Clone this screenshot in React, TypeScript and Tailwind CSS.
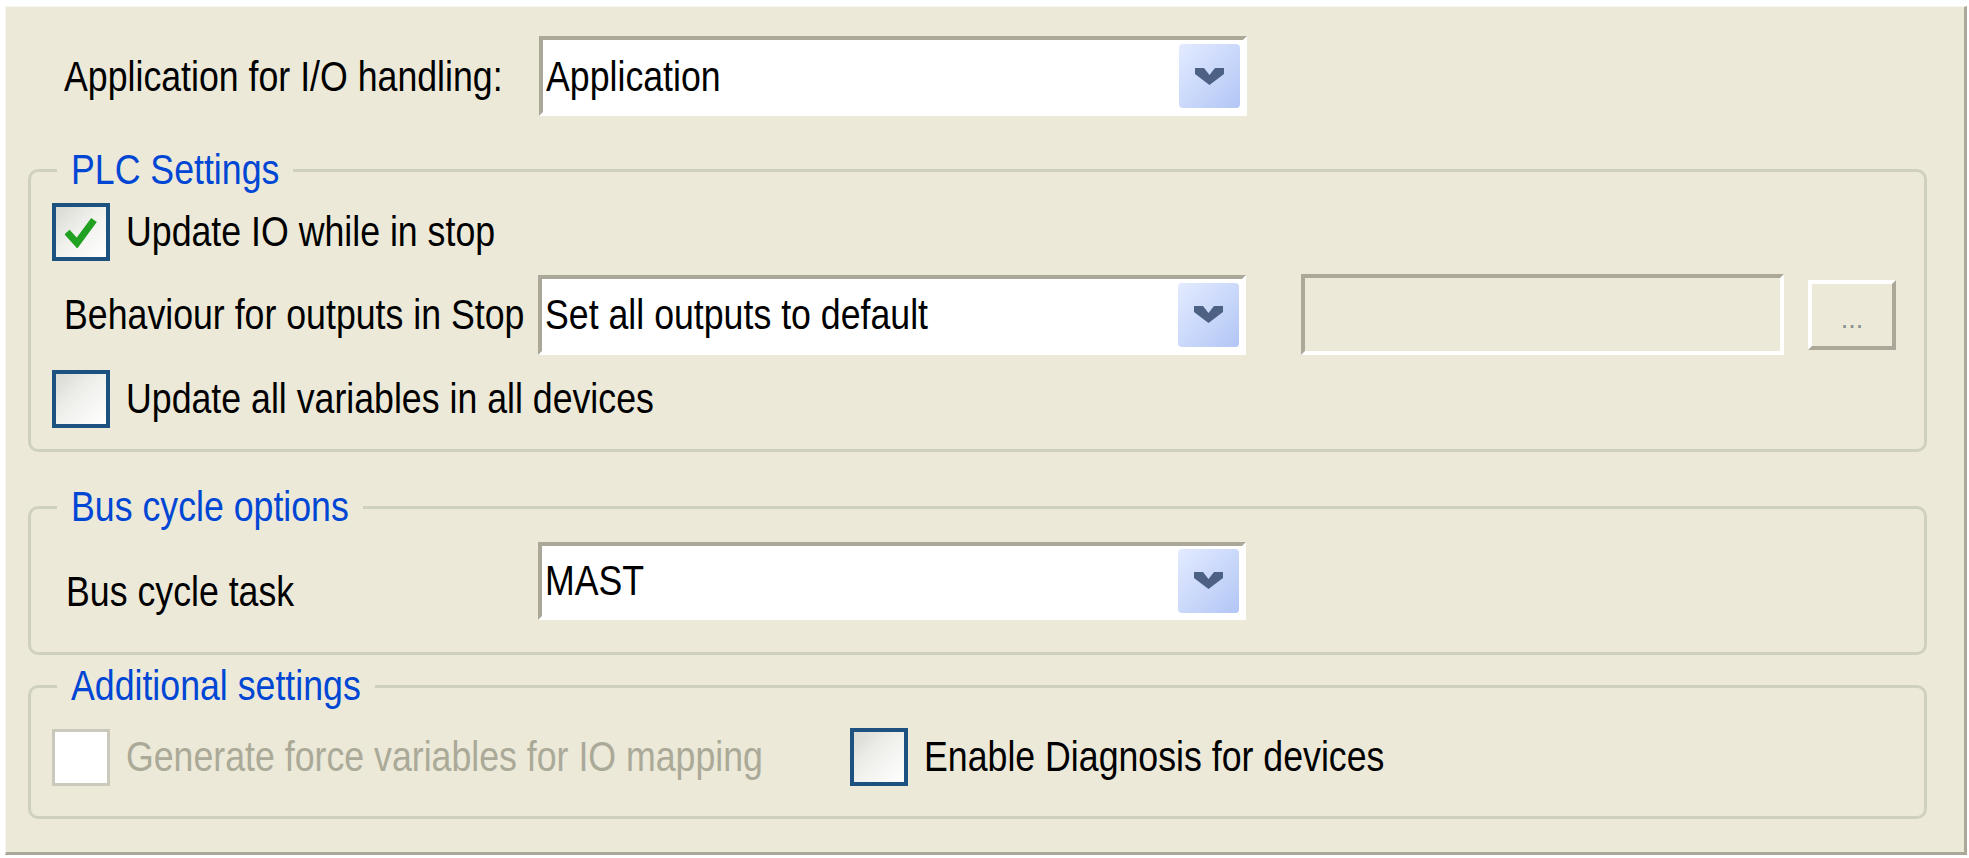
import type {ReactNode} from 'react';

const font = "font-['Liberation_Sans',Arial,sans-serif]";

// the reference uses a narrow sans, squeeze the regular one
function T({children, className = ''}: {children: ReactNode; className?: string}) {
  return (
    <span className={`inline-block origin-left scale-x-[0.85] whitespace-nowrap leading-none ${className}`}>
      {children}
    </span>
  );
}

function Chevron() {
  return (
    <svg width="29" height="17" viewBox="0 0 29 17">
      <polygon points="0,0 9,0 14.5,7 20,0 29,0 29,6 14.5,17 0,6" fill="#4d6185" />
    </svg>
  );
}

function Combo({value, h = 'h-[80px]'}: {value: string; h?: string}) {
  return (
    <div
      className={`${h} w-[708px] shrink-0 flex items-center bg-white border-4 border-t-[#aca899] border-l-[#aca899] border-r-white border-b-white`}
    >
      <div className="flex-1 pl-[3px] text-black">
        <T>{value}</T>
      </div>
      <div className="mr-[3px] w-[61px] h-[64px] rounded-[4px] bg-linear-to-br from-[#e3ebff] to-[#b2c6f5] flex items-center justify-center">
        <Chevron />
      </div>
    </div>
  );
}

function Check({checked = false, disabled = false}: {checked?: boolean; disabled?: boolean}) {
  if (disabled) {
    return <div className="w-[58px] h-[57px] shrink-0 bg-white border-[3px] border-[#cbc9bc]" />;
  }
  return (
    <div className="w-[58px] h-[58px] shrink-0 border-4 border-[#1c5180] bg-linear-to-br from-[#dadad4] via-[#f1f1ee] to-white flex items-center justify-center">
      {checked && (
        <svg width="32" height="32" viewBox="0 0 32 32">
          <path d="M2 16 L12 27 L29 4" fill="none" stroke="#21a121" strokeWidth="7" />
        </svg>
      )}
    </div>
  );
}

function Group({title, w, children, className = ''}: {title: string; w: string; children: ReactNode; className?: string}) {
  return (
    <fieldset className={`w-[1899px] ml-[22px] border-[3px] border-[#d0d0bf] rounded-[10px] ${className}`}>
      <legend className="ml-[26px] px-[14px] leading-[48px] text-[#0046d5]">
        <span className={`inline-block ${w}`}>
          <T>{title}</T>
        </span>
      </legend>
      {children}
    </fieldset>
  );
}

export default function App() {
  return (
    <div className={`w-[1969px] h-[858px] bg-white pt-[6px] pl-[5px] text-[42px] ${font}`}>
      <div className="w-[1962px] h-[849px] bg-[#ece9d8] border-l border-t border-[#f7f6f1] border-r-[3px] border-b-[3px] border-r-[#aca899] border-b-[#aca899]">
        {/* application row */}
        <div className="flex items-center pt-[29px] pl-[58px]">
          <div className="w-[475px] text-black">
            <T>Application for I/O handling:</T>
          </div>
          <Combo value="Application" />
        </div>

        <Group title="PLC Settings" w="w-[208px]" className="mt-[30px]">
          <div className="pl-[21px] pb-[21px]">
            <div className="mt-[9px] flex items-center gap-[16px]">
              <Check checked />
              <T className="text-black">Update IO while in stop</T>
            </div>
            <div className="mt-[13px] flex items-center">
              <div className="ml-[12px] w-[474px] text-black">
                <T>Behaviour for outputs in Stop</T>
              </div>
              <Combo value="Set all outputs to default" />
              <div className="ml-[55px] w-[483px] h-[81px] border-4 border-t-[#aca899] border-l-[#aca899] border-r-white border-b-white" />
              <div className="ml-[24px] w-[88px] h-[70px] border-4 border-t-white border-l-white border-r-[#aca899] border-b-[#aca899] flex items-end justify-center pb-[13px] text-[27px] leading-none text-[#8f9096]">
                ...
              </div>
            </div>
            <div className="mt-[15px] flex items-center gap-[16px]">
              <Check />
              <T className="text-black">Update all variables in all devices</T>
            </div>
          </div>
        </Group>

        <Group title="Bus cycle options" w="w-[278px]" className="mt-[31px]">
          <div className="pl-[21px] pb-[29px]">
            <div className="mt-[7px] flex items-center">
              <div className="ml-[14px] w-[472px] mt-[22px] text-black">
                <T>Bus cycle task</T>
              </div>
              <Combo value="MAST" h="h-[78px]" />
            </div>
          </div>
        </Group>

        <Group title="Additional settings" w="w-[290px]" className="mt-[7px]">
          <div className="pl-[21px] pb-[30px]">
            <div className="mt-[18px] flex items-center">
              <div className="w-[798px] shrink-0 flex items-center gap-[16px]">
                <Check disabled />
                <T className="text-[#aba998]">Generate force variables for IO mapping</T>
              </div>
              <div className="flex items-center gap-[16px]">
                <Check />
                <T className="text-black">Enable Diagnosis for devices</T>
              </div>
            </div>
          </div>
        </Group>
      </div>
    </div>
  );
}
